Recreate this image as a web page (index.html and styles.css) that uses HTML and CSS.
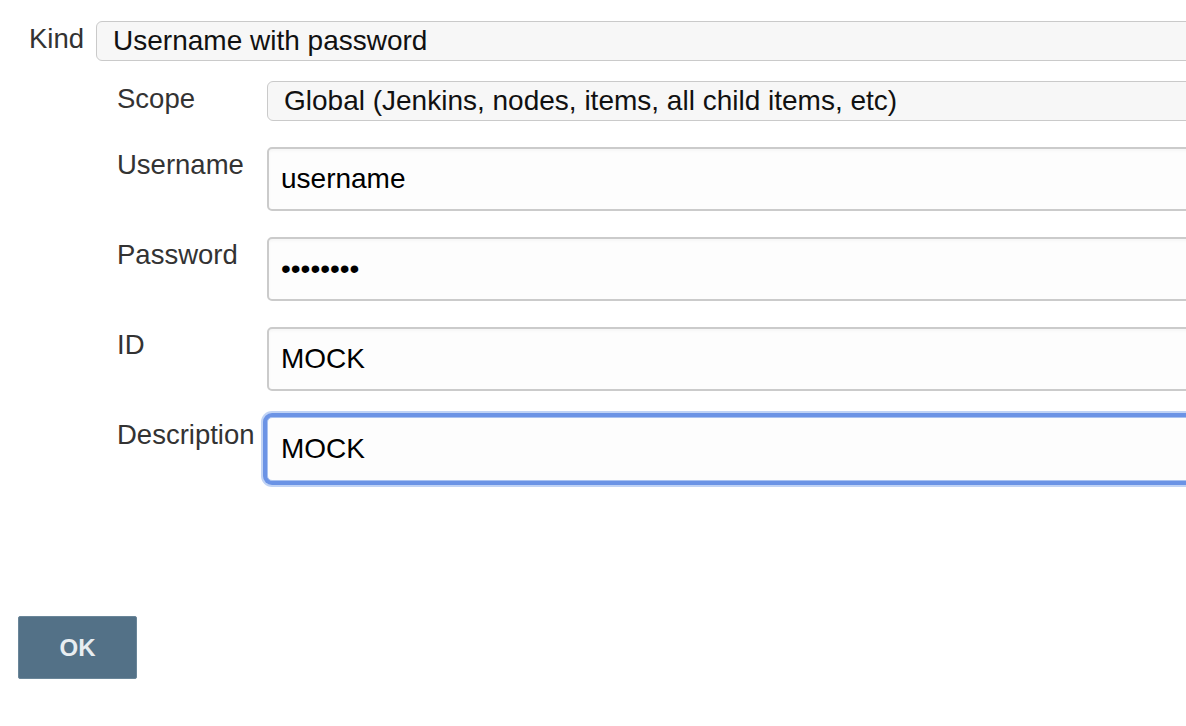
FILE: index.html
```html
<!DOCTYPE html>
<html lang="en">
<head>
<meta charset="utf-8">
<title>Credentials</title>
<link rel="stylesheet" href="styles.css">
</head>
<body>
<form class="form">
  <div class="kind-row">
    <label class="label kind-label">Kind</label>
    <div class="select">Username with password</div>
  </div>
  <div class="nested">
    <div class="row">
      <label class="label">Scope</label>
      <div class="select">Global (Jenkins, nodes, items, all child items, etc)</div>
    </div>
    <div class="row">
      <label class="label">Username</label>
      <input class="field" type="text" value="username">
    </div>
    <div class="row">
      <label class="label">Password</label>
      <input class="field" type="password" value="password">
    </div>
    <div class="row">
      <label class="label">ID</label>
      <input class="field" type="text" value="MOCK">
    </div>
    <div class="row">
      <label class="label">Description</label>
      <input class="field focused" type="text" value="MOCK">
    </div>
  </div>
  <div class="actions">
    <button class="ok" type="button">OK</button>
  </div>
</form>
</body>
</html>
```

FILE: styles.css
```css
html, body {
  margin: 0;
  padding: 0;
  overflow: hidden;
  background: #ffffff;
}

body {
  font-family: "Liberation Sans", Arial, sans-serif;
  width: 1186px;
  height: 726px;
}

.form {
  padding-top: 21px;
}

.label {
  font-size: 27.5px;
  line-height: 31px;
  color: #333333;
  margin-top: 2px;
}

.kind-row {
  display: flex;
  align-items: flex-start;
  padding-left: 29px;
  gap: 12px;
}

.select {
  flex-shrink: 0;
  box-sizing: border-box;
  width: 1200px;
  height: 40px;
  border: 1.5px solid #cacaca;
  border-radius: 6px;
  background: #f7f7f7;
  font-size: 28px;
  line-height: 37px;
  color: #111111;
  padding-left: 16px;
  white-space: nowrap;
}

.nested {
  margin-top: 20px;
  padding-left: 117px;
  display: flex;
  flex-direction: column;
  gap: 26px;
}

.row {
  display: flex;
  align-items: flex-start;
}

.row .label {
  width: 150px;
  flex-shrink: 0;
}

.field {
  flex-shrink: 0;
  box-sizing: border-box;
  width: 1000px;
  height: 64px;
  margin: 0;
  border: 2px solid #cbcbcb;
  border-radius: 5px;
  background: #fdfdfd;
  box-shadow: inset 0 2px 3px rgba(0, 0, 0, 0.03);
  font-family: "Liberation Sans", Arial, sans-serif;
  font-size: 28px;
  color: #000000;
  padding: 0 12px;
  outline: none;
}

.field.focused {
  border: 1px solid #a9c2f0;
  box-shadow: 0 0 0 4px #6b93e5, 0 0 0 6px #c0d3f5;
  padding-left: 13px;
}

.actions {
  margin-top: 135px;
  padding-left: 18px;
}

.ok {
  box-sizing: border-box;
  width: 119px;
  height: 63px;
  margin: 0;
  background: #537187;
  border: 1px solid #6a8699;
  border-radius: 2px;
  color: #e8edf1;
  font-family: "Liberation Sans", Arial, sans-serif;
  font-weight: bold;
  font-size: 24px;
  padding: 0;
  cursor: pointer;
}
```
